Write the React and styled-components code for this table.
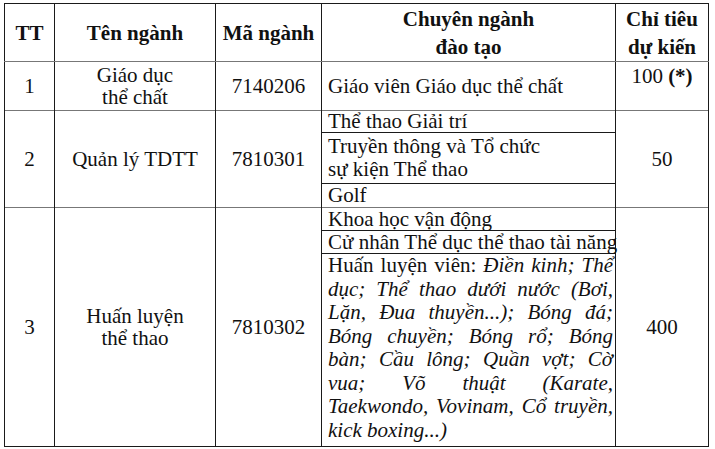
import React from "react";
import styled, { createGlobalStyle } from "styled-components";

const Global = createGlobalStyle`
  html, body { margin: 0; padding: 0; background: #ffffff; }
  body { width: 715px; height: 449px; overflow: hidden; }
`;

const Table = styled.table`
  margin: 3px 0 0 4px;
  width: 704px;
  border-collapse: collapse;
  table-layout: fixed;
  font-family: "Liberation Serif", "Times New Roman", serif;
  font-size: 21px;
  line-height: 21px;
  color: #111;
  border: 1px solid #1a1a1a;
`;

const Th = styled.th`
  border: 1px solid #1a1a1a;
  border-bottom-color: #777;
  font-weight: bold;
  line-height: 28px;
  padding: 0;
  text-align: center;
  vertical-align: middle;
`;

const Row = styled.tr`
  height: ${(p) => p.$h}px;
`;

const Td = styled.td`
  border-left: 1px solid #1a1a1a;
  border-right: 1px solid #1a1a1a;
  border-top: 1px solid ${(p) => (p.$sub ? "#1a1a1a" : "#777")};
  padding: ${(p) => (p.$top ? "3px 0 0 0" : "0")};
  line-height: 22px;
  text-align: center;
  vertical-align: ${(p) => (p.$top ? "top" : "middle")};
`;

const Spec = styled.td`
  border-left: 1px solid #1a1a1a;
  border-right: 1px solid #1a1a1a;
  border-top: 1px solid ${(p) => (p.$sub ? "#1a1a1a" : "#777")};
  padding: 0 2px 0 6px;
  line-height: ${(p) => (p.$lh ? p.$lh : 21)}px;
  text-align: left;
  vertical-align: ${(p) => (p.$va ? p.$va : "middle")};
  white-space: nowrap;
`;

const Line = styled.span`
  display: block;
  line-height: 23.5px;
  text-align: ${(p) => (p.$last ? "left" : "justify")};
  text-align-last: ${(p) => (p.$last ? "left" : "justify")};
  white-space: normal;
`;

const Em = styled.i`
  font-style: italic;
`;

const B = styled.b`
  font-weight: bold;
`;

const Col = styled.col`
  width: ${(p) => p.$w}px;
`;

export default function App() {
  return (
    <>
      <Global />
      <Table>
        <colgroup>
          <Col $w={50} />
          <Col $w={161} />
          <Col $w={106} />
          <Col $w={294} />
          <Col $w={93} />
        </colgroup>
        <thead>
          <Row $h={58}>
            <Th>TT</Th>
            <Th>Tên ngành</Th>
            <Th>Mã ngành</Th>
            <Th>
              Chuyên ngành
              <br />
              đào tạo
            </Th>
            <Th>
              Chỉ tiêu
              <br />
              dự kiến
            </Th>
          </Row>
        </thead>
        <tbody>
          <Row $h={49}>
            <Td>1</Td>
            <Td>
              Giáo dục
              <br />
              thể chất
            </Td>
            <Td>7140206</Td>
            <Spec>Giáo viên Giáo dục thể chất</Spec>
            <Td $top>
              100 <B>(*)</B>
            </Td>
          </Row>

          <Row $h={22}>
            <Td rowSpan={3}>2</Td>
            <Td rowSpan={3}>Quản lý TDTT</Td>
            <Td rowSpan={3}>7810301</Td>
            <Spec>Thể thao Giải trí</Spec>
            <Td rowSpan={3}>50</Td>
          </Row>
          <Row $h={51}>
            <Spec $sub $lh={23}>
              Truyền thông và Tổ chức
              <br />
              sự kiện Thể thao
            </Spec>
          </Row>
          <Row $h={24}>
            <Spec $sub>Golf</Spec>
          </Row>

          <Row $h={23}>
            <Td rowSpan={3}>3</Td>
            <Td rowSpan={3}>
              Huấn luyện
              <br />
              thể thao
            </Td>
            <Td rowSpan={3}>7810302</Td>
            <Spec>Khoa học vận động</Spec>
            <Td rowSpan={3}>400</Td>
          </Row>
          <Row $h={23}>
            <Spec $sub>Cử nhân Thể dục thể thao tài năng</Spec>
          </Row>
          <Row $h={193}>
            <Spec $sub $va="top">
              <Line>
                Huấn luyện viên: <Em>Điền kinh; Thể</Em>
              </Line>
              <Line>
                <Em>dục; Thể thao dưới nước (Bơi,</Em>
              </Line>
              <Line>
                <Em>Lặn, Đua thuyền...); Bóng đá;</Em>
              </Line>
              <Line>
                <Em>Bóng chuyền; Bóng rổ; Bóng</Em>
              </Line>
              <Line>
                <Em>bàn; Cầu lông; Quần vợt; Cờ</Em>
              </Line>
              <Line>
                <Em>vua; Võ thuật (Karate,</Em>
              </Line>
              <Line>
                <Em>Taekwondo, Vovinam, Cổ truyền,</Em>
              </Line>
              <Line $last>
                <Em>kick boxing...)</Em>
              </Line>
            </Spec>
          </Row>
        </tbody>
      </Table>
    </>
  );
}
